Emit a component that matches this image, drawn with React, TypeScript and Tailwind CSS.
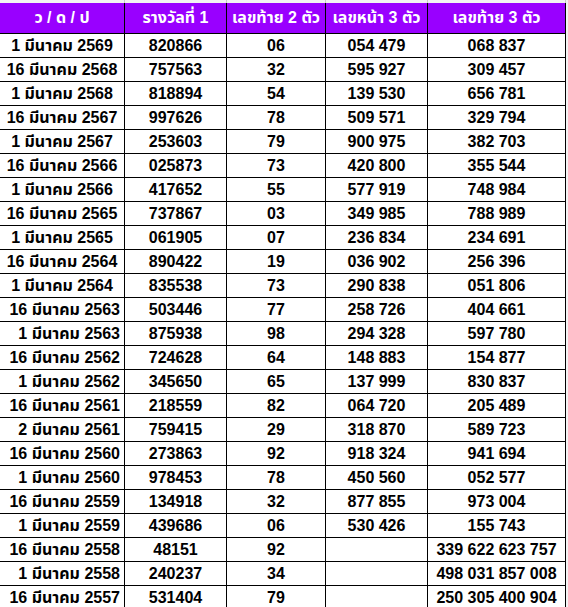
const rows: [string, string, string, string, string][] = [
  ['1 มีนาคม 2569', '820866', '06', '054 479', '068 837'],
  ['16 มีนาคม 2568', '757563', '32', '595 927', '309 457'],
  ['1 มีนาคม 2568', '818894', '54', '139 530', '656 781'],
  ['16 มีนาคม 2567', '997626', '78', '509 571', '329 794'],
  ['1 มีนาคม 2567', '253603', '79', '900 975', '382 703'],
  ['16 มีนาคม 2566', '025873', '73', '420 800', '355 544'],
  ['1 มีนาคม 2566', '417652', '55', '577 919', '748 984'],
  ['16 มีนาคม 2565', '737867', '03', '349 985', '788 989'],
  ['1 มีนาคม 2565', '061905', '07', '236 834', '234 691'],
  ['16 มีนาคม 2564', '890422', '19', '036 902', '256 396'],
  ['1 มีนาคม 2564', '835538', '73', '290 838', '051 806'],
  ['16 มีนาคม 2563', '503446', '77', '258 726', '404 661'],
  ['1 มีนาคม 2563', '875938', '98', '294 328', '597 780'],
  ['16 มีนาคม 2562', '724628', '64', '148 883', '154 877'],
  ['1 มีนาคม 2562', '345650', '65', '137 999', '830 837'],
  ['16 มีนาคม 2561', '218559', '82', '064 720', '205 489'],
  ['2 มีนาคม 2561', '759415', '29', '318 870', '589 723'],
  ['16 มีนาคม 2560', '273863', '92', '918 324', '941 694'],
  ['1 มีนาคม 2560', '978453', '78', '450 560', '052 577'],
  ['16 มีนาคม 2559', '134918', '32', '877 855', '973 004'],
  ['1 มีนาคม 2559', '439686', '06', '530 426', '155 743'],
  ['16 มีนาคม 2558', '48151', '92', '', '339 622 623 757'],
  ['1 มีนาคม 2558', '240237', '34', '', '498 031 857 008'],
  ['16 มีนาคม 2557', '531404', '79', '', '250 305 400 904'],
];

const headers = ['ว / ด / ป', 'รางวัลที่ 1', 'เลขท้าย 2 ตัว', 'เลขหน้า 3 ตัว', 'เลขท้าย 3 ตัว'];
const widths = ['w-[125px]', 'w-[102px]', 'w-[99px]', 'w-[102px]', 'w-[138px]'];

export default function App() {
  return (
    <div
      className="w-[568px] h-[607px] overflow-hidden bg-white text-[16px] font-bold text-black"
      style={{ fontFamily: '"Liberation Sans", Arial, "Noto Sans Thai", "Noto Sans", sans-serif' }}
    >
      {/* spreadsheet gridline strip above the header */}
      <div className="flex h-[3px] bg-[#f3f3f3]">
        {widths.map((w, i) => (
          <div key={i} className={`${w} border-r border-[#c8c8c8]`} />
        ))}
      </div>

      <div className="flex">
        <div className="w-[566px]">
          <div className="flex h-[31px] bg-[#9900ff] text-white border-b border-black">
            {headers.map((h, i) => (
              <div key={i} className={`${widths[i]} flex items-center justify-center border-r border-black whitespace-nowrap`}>
                {h}
              </div>
            ))}
          </div>

          {rows.map((r, ri) => (
            <div key={ri} className="flex h-[24px] border-b border-black">
              {r.map((c, ci) => (
                <div
                  key={ci}
                  className={`${widths[ci]} flex items-center border-r border-black whitespace-nowrap ${
                    ci === 0 && ri > 10 ? 'justify-end pr-[4px]' : 'justify-center'
                  }`}
                >
                  {c}
                </div>
              ))}
            </div>
          ))}
        </div>
        <div className="flex-1 bg-[#f3f3f3]" />
      </div>
    </div>
  );
}
